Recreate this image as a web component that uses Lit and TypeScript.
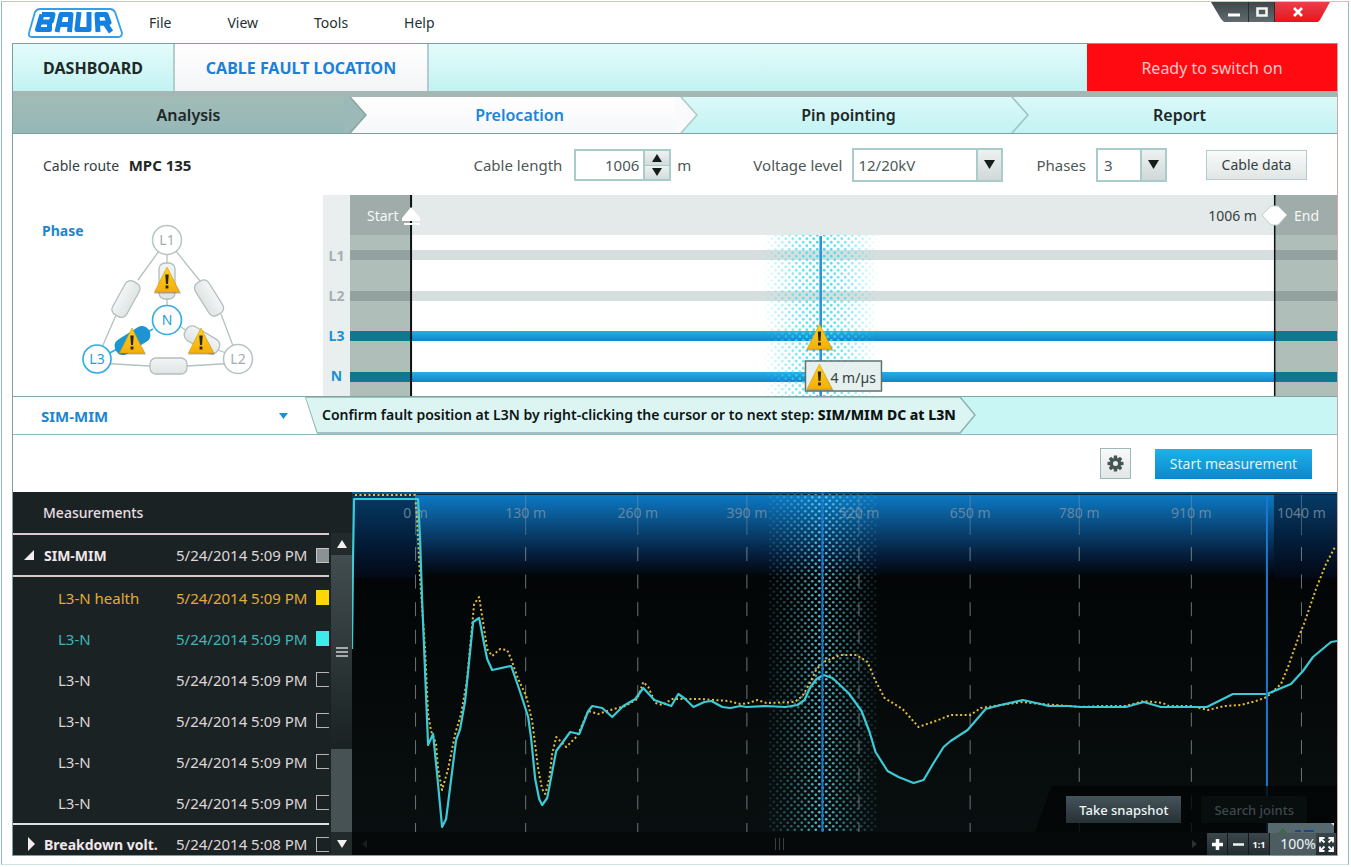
import { LitElement, html, svg, css } from "lit";
import { customElement, state } from "lit/decorators.js";

interface Row {
  id: string;
  name: string;
  time: string;
  tone: string;
  checked: boolean;
}

const PLOT_LEFT = 352;
const PLOT_WIDTH = 984;
const pct = (x: number, left: number, width: number) => `${(((x - left) / width) * 100).toFixed(3)}%`;

const TICKS = [
  { x: 415.5, label: "0 m" },
  { x: 525.5, label: "130 m" },
  { x: 637.5, label: "260 m" },
  { x: 746.5, label: "390 m" },
  { x: 858.5, label: "520 m" },
  { x: 969.5, label: "650 m" },
  { x: 1078.5, label: "780 m" },
  { x: 1190.5, label: "910 m" },
  { x: 1300.5, label: "1040 m" },
];

const FAULT_TRACE =
  "352,650 353,560 354,500 418,500 420,540 422,600 428,746 433,735 437,775 442,828 446,820 456,741 460,730 465,702 473,623 479,619 484,645 487,660 492,671 511,667 520,693 528,718 531,740 535,780 539,800 542,806 547,799 556,752 570,733 579,735 588,712 592,707 602,709 612,718 623,707 635,700 643,689 654,701 671,707 678,695 685,700 693,708 704,703 711,702 722,708 730,709 740,707 746,708 765,707 785,708 797,706 804,701 810,688 816,680 823,676 832,679 848,694 861,712 869,733 875,753 887,772 898,778 913,784 923,781 933,764 943,748 950,742 967,731 985,710 1000,706 1022,701 1040,705 1048,707 1068,707 1080,708 1125,708 1143,703 1160,708 1206,708 1220,701 1232,695 1266,695 1290,685 1302,672 1312,658 1330,643 1336,642";

const HEALTH_TRACE =
  "355,496 415,496 417,520 420,580 425,650 428,715 431,732 436,745 438,770 442,791 448,770 455,735 461,715 467,680 474,605 479,598 484,630 487,650 492,657 500,650 507,651 511,660 518,680 526,697 532,722 538,770 542,790 545,795 549,780 552,755 556,738 566,748 577,737 588,712 598,715 610,711 625,707 637,700 643,683 648,688 655,704 662,706 672,700 700,700 728,702 740,705 748,704 757,701 766,704 794,703 802,697 810,683 816,670 825,662 840,656 856,656 867,663 875,682 884,699 902,710 918,728 935,722 950,716 970,716 980,709 1000,706 1022,703 1040,705 1068,707 1080,708 1100,707 1125,707 1143,702 1162,704 1168,707 1190,707 1207,711 1224,707 1240,706 1255,702 1266,698 1280,685 1287,668 1298,637 1303,625 1315,590 1325,565 1334,548";

const warning = (x: number, y: number) => svg`
  <g transform="translate(${x} ${y})">
    <path d="M-13 13.5 L0 -12 L14 13.5 Z" fill="#5a4a20" opacity=".45"/>
    <path d="M-12.5 12 L0 -13 L12.5 12 Z" fill="url(#amber)" stroke="#d99a08" stroke-width=".6"/>
    <path d="M-1.7 -5.5 H1.7 L1 4 H-1 Z M-1.4 5.6 H1.4 V8.4 H-1.4 Z" fill="#2a2410"/>
  </g>`;

const amber = svg`
  <linearGradient id="amber" x1="0" y1="0" x2="0" y2="1">
    <stop offset="0" stop-color="#ffd21c"/><stop offset="1" stop-color="#f5ae0c"/>
  </linearGradient>`;

@customElement("phase-diagram")
export class PhaseDiagram extends LitElement {
  static styles = css`
    :host { display: block; }
    svg { display: block; width: 178px; height: 158px; }
    text { font-family: "Noto Sans", "Open Sans", sans-serif; font-size: 14px; text-anchor: middle; }
    .wire { stroke: #b4c2c0; stroke-width: 1.3; fill: none; }
    .box { fill: url(#shell); stroke: #b2bfbd; stroke-width: 1.3; }
    .off { fill: #fff; stroke: #b7c4c3; stroke-width: 1.5; }
    .on { fill: #fff; stroke: #35ade0; stroke-width: 1.7; }
    .t-off { fill: #a3aeae; }
    .t-on { fill: #1e9fdc; }
  `;

  render() {
    return html`<svg viewBox="80 222 178 158" role="img" aria-label="Phase diagram">
      <defs>
        ${amber}
        <linearGradient id="shell" x1="0" y1="0" x2="0" y2="1">
          <stop offset="0" stop-color="#f2f5f5"/><stop offset="1" stop-color="#dfe5e4"/>
        </linearGradient>
      </defs>
      <path class="wire" d="M167 240 L138 280 M116 315 L97 359 M167 240 L200 281 M221 314 L238 359 M97 363 L150 366 M187 366 L238 363 M167 254 V264 M167 299 V308 M181 327 L187 331 M218 350 L226 353"/>
      <path d="M108 354 L153 329" stroke="#35ade0" stroke-width="1.7"/>
      <rect class="box" x="107" y="291" width="38" height="16" rx="6" transform="rotate(-61 126 299)"/>
      <rect class="box" x="190" y="290" width="38" height="16" rx="6" transform="rotate(58 209 298)"/>
      <rect class="box" x="150" y="358" width="37" height="16" rx="6"/>
      <rect class="box" x="159" y="263" width="16" height="36" rx="6"/>
      <rect class="box" x="183" y="332" width="38" height="16" rx="7" transform="rotate(31 202 340)"/>
      <rect x="113" y="332" width="39" height="17" rx="8" fill="#1d95d3" transform="rotate(-32 132.500 340.500)"/>
      <circle class="off" cx="167" cy="240" r="14.500"/><text class="t-off" x="167" y="245">L1</text>
      <circle class="off" cx="238" cy="359" r="14.500"/><text class="t-off" x="238" y="364">L2</text>
      <circle class="on" cx="97" cy="359" r="14"/><text class="t-on" x="97" y="364">L3</text>
      <circle class="on" cx="167" cy="320" r="14.500"/><text class="t-on" x="167" y="325">N</text>
      ${warning(167, 280)} ${warning(132, 341)} ${warning(201, 341)}
    </svg>`;
  }
}

@customElement("cable-map")
export class CableMap extends LitElement {
  static styles = css`
    :host { display: grid; grid-template-columns: 27px 1fr; }
    .phases { display: grid; grid-template-rows: 40px repeat(4, 1fr); background: #e9efee; text-align: center; font-weight: 700; font-size: 14px; color: #a3b0ae; padding-bottom: 1px; }
    .phases span { align-self: center; }
    .phases .live { color: #1e90d2; }
    svg { display: block; width: 100%; height: 201px; }
    text { font-family: "Noto Sans", "Open Sans", sans-serif; font-size: 14px; }
  `;

  render() {
    const L = 350;
    const W = 986;
    const p = (x: number) => pct(x, L, W);
    const lines = [
      { y: 55, h: 10, fill: "#d6dfde", edge: "#93a29f" },
      { y: 96, h: 10, fill: "#d6dfde", edge: "#93a29f" },
      { y: 136, h: 10, fill: "url(#core)", edge: "#0f788f" },
      { y: 177, h: 10, fill: "url(#core)", edge: "#0f788f" },
    ];
    return html`
      <div class="phases"><i></i><span>L1</span><span>L2</span><span class="live">L3</span><span class="live">N</span></div>
      <svg role="img" aria-label="Cable route">
        <defs>
          ${amber}
          <linearGradient id="core" x1="0" y1="0" x2="0" y2="1"><stop offset="0" stop-color="#26b0e2"/><stop offset="1" stop-color="#0f86cc"/></linearGradient>
          <linearGradient id="fade"><stop offset="0" stop-color="#000"/><stop offset=".3" stop-color="#aaa"/><stop offset=".5" stop-color="#fff"/><stop offset=".7" stop-color="#aaa"/><stop offset="1" stop-color="#000"/></linearGradient>
          <pattern id="dots" width="7" height="7" patternUnits="userSpaceOnUse"><circle cx="1.750" cy="1.750" r="1.400" fill="#3edcee"/><circle cx="5.250" cy="5.250" r="1.400" fill="#3edcee"/></pattern>
          <mask id="halo"><rect x=${p(762)} y="0" width=${p(L + 116)} height="201" fill="url(#fade)"/></mask>
        </defs>
        <rect width="100%" height="201" fill="#fff"/>
        <rect width="100%" height="40" fill="#e4eaea"/>
        <rect width=${p(411)} height="201" fill="#b0beba"/>
        <rect width=${p(411)} height="40" fill="#a0aca9"/>
        <rect x=${p(1274)} width=${p(L + 62)} height="201" fill="#b0beba"/>
        <rect x=${p(1274)} width=${p(L + 62)} height="40" fill="#a0aca9"/>
        ${lines.map(
          (l) => svg`<rect y=${l.y} width="100%" height=${l.h} fill=${l.fill}/>
            <rect y=${l.y} width=${p(411)} height=${l.h} fill=${l.edge}/>
            <rect x=${p(1274)} y=${l.y} width=${p(L + 62)} height=${l.h} fill=${l.edge}/>`,
        )}
        <rect x=${p(762)} y="40" width=${p(L + 116)} height="161" fill="url(#dots)" mask="url(#halo)"/>
        <rect x=${p(410)} width="2" height="201" fill="#0c1214"/>
        <rect x=${p(1273)} width="1.500" height="201" fill="#0c1214"/>
        <text x=${p(367)} y="26" fill="#f4f8f8">Start</text>
        <text x=${p(1256)} y="26" fill="#33403f" text-anchor="end">1006 m</text>
        <text x=${p(1293)} y="26" fill="#f4f8f8">End</text>
        <svg x=${p(411)} overflow="visible"><path d="M-9 23 L0 12 L9 23 V26 H-9 Z M-7 28 H9 V30 H-7 Z" fill="#fff"/></svg>
        <svg x=${p(1274)} overflow="visible"><path d="M-13 20 L-4 11 H3 L12 20 L3 30 H-4 Z" fill="#fff" stroke="#c3cdcc"/></svg>
        <svg x=${p(820)} overflow="visible">
          <rect x="-1" y="41" width="2.500" height="160" fill="#2f8fd8"/>
          <rect x="-15" y="166" width="76" height="30" fill="#e6f0ef" stroke="#5c7270" stroke-width="1.500"/>
          <text x="10" y="188" fill="#33403f">4 m/µs</text>
          ${warning(-1, 142)} ${warning(-1, 182)}
        </svg>
      </svg>`;
  }
}

@customElement("trace-plot")
export class TracePlot extends LitElement {
  static styles = css`
    :host { display: grid; grid-template-rows: 1fr 23px; position: relative; background: #020405; overflow: hidden; }
    .canvas { position: absolute; inset: 0; width: 100%; height: 100%; }
    text { font-family: "Noto Sans", "Open Sans", sans-serif; font-size: 14px; fill: #7f93a4; fill-opacity: .8; text-anchor: middle; }
    .actions { position: relative; justify-self: end; align-self: end; display: flex; gap: 20px; padding: 10px 30px 9px 30px; background: linear-gradient(110deg, transparent 14px, #020405cc 15px); }
    button { font: inherit; border: 0; cursor: pointer; }
    .act { height: 27px; font-size: 13px; font-weight: 500; line-height: 20px; padding: 0 13px; color: #eef6f6; background: linear-gradient(#46535a, #263136); }
    .act:disabled { color: #3f484b; background: #080d0e; }
    .foot { position: relative; display: flex; align-items: center; background: #05090a; color: #3a4144; }
    .track { flex: 1; display: flex; align-items: center; justify-content: space-between; padding: 0 9px; height: 100%; }
    .zoom { display: flex; height: 22px; align-self: end; }
    .zoom button { width: 21px; padding: 0; background: linear-gradient(#3a464b, #232d31); border-right: 1px solid #12191b; display: grid; place-items: center; }
    .zoom svg { display: block; }
    .zoom output { width: 46px; text-align: right; font-size: 14px; line-height: 22px; color: #eef6f6; background: #4d5c61; }
    .zoom .ratio { font-size: 9px; font-weight: 700; color: #fff; }
    .tip { position: absolute; right: 3px; bottom: 22px; width: 66px; height: 10px; background: #56696f; }
  `;

  render() {
    const p = (x: number) => pct(x, PLOT_LEFT, PLOT_WIDTH);
    const w = (x: number) => pct(x, 0, PLOT_WIDTH);
    return html`
      <svg class="canvas" role="img" aria-label="Reflection traces over distance">
        <defs>
          <linearGradient id="sky" x1="0" y1="0" x2="0" y2="1"><stop offset="0" stop-color="#0c7ecb"/><stop offset=".4" stop-color="#09497d"/><stop offset=".75" stop-color="#051c38"/><stop offset="1" stop-color="#020405"/></linearGradient>
          <linearGradient id="floor" x1="0" y1="0" x2="0" y2="1"><stop offset="0" stop-color="#020405"/><stop offset="1" stop-color="#090f10"/></linearGradient>
          <linearGradient id="fade"><stop offset="0" stop-color="#1a1a1a"/><stop offset=".3" stop-color="#888"/><stop offset=".5" stop-color="#fff"/><stop offset=".7" stop-color="#888"/><stop offset="1" stop-color="#1a1a1a"/></linearGradient>
          <pattern id="dots" width="7" height="7" patternUnits="userSpaceOnUse"><circle cx="1.750" cy="1.750" r="1.350" fill="#5ccfe2"/><circle cx="5.250" cy="5.250" r="1.350" fill="#5ccfe2"/></pattern>
          <mask id="halo"><rect x=${p(767)} y="0" width=${w(110)} height="340" fill="url(#fade)"/></mask>
        </defs>
        <rect y="60" width="100%" height="303" fill="url(#floor)"/>
        <rect width="100%" height="86" fill="url(#sky)"/>
        <rect width=${w(64)} height="86" fill="#020d20" opacity=".58"/>
        <rect x=${p(1273)} width=${w(64)} height="86" fill="#020d20" opacity=".58"/>
        <rect width="100%" height="2" fill="#07598f"/><rect y="2" width="100%" height="1" fill="#032640"/>
        ${TICKS.map(
          (t) => svg`
            <line x1=${p(t.x)} x2=${p(t.x)} y1="3" y2="43" stroke="#8fa4b4" stroke-opacity=".45"/>
            <line x1=${p(t.x)} x2=${p(t.x)} y1="55" y2="341" stroke="#9aa0a8" stroke-opacity=".7" stroke-dasharray="14 13.600"/>
            <text x=${p(t.x)} y="26">${t.label}</text>`,
        )}
        <rect x=${p(767)} y="2" width=${w(110)} height="338" fill="url(#dots)" mask="url(#halo)"/>
        <svg viewBox="352 493 984 363" preserveAspectRatio="none" width="100%" height="100%">
          <g fill="none" stroke-linejoin="round">
            <polyline points=${HEALTH_TRACE} stroke="#e5bd3c" stroke-width="2" stroke-dasharray="2 2.500" vector-effect="non-scaling-stroke"/>
            <polyline points=${FAULT_TRACE} stroke="#3ccbd6" stroke-width="2.200" vector-effect="non-scaling-stroke"/>
            <path d="M822 493 V833 M1266 496 V833" stroke="#1b78cf" stroke-width="2" vector-effect="non-scaling-stroke"/>
          </g>
        </svg>
      </svg>
      <div class="actions">
        <button class="act" type="button">Take snapshot</button>
        <button class="act" type="button" disabled>Search joints</button>
      </div>
      <div class="foot">
        <div class="track">
          <svg width="7" height="8" aria-hidden="true"><path d="M6 0 L1 4 L6 8 Z" fill="#161e20"/></svg>
          <svg width="9" height="12" aria-hidden="true"><path d="M.5 0 V12 M4.500 0 V12 M8.500 0 V12" stroke="#3a4144"/></svg>
          <svg width="7" height="8" aria-hidden="true"><path d="M1 0 L6 4 L1 8 Z" fill="#2a3235"/></svg>
        </div>
        <div class="zoom">
          <button type="button" aria-label="Zoom in"><svg width="11" height="11"><path d="M5.500 0 V11 M0 5.500 H11" stroke="#fff" stroke-width="3.500"/></svg></button>
          <button type="button" aria-label="Zoom out"><svg width="11" height="11"><path d="M0 5.500 H11" stroke="#e8eeee" stroke-width="2.600"/></svg></button>
          <button type="button" class="ratio">1:1</button>
          <output>100%</output>
          <button type="button" aria-label="Fit to window"><svg width="15" height="15" viewBox="0 0 15 15" fill="none" stroke="#fff" stroke-width="1.800"><path d="M1 5.500 V1 H5.500 M1 1 L5.500 5.500 M9.500 1 H14 V5.500 M14 1 L9.500 5.500 M1 9.500 V14 H5.500 M1 14 L5.500 9.500 M9.500 14 H14 V9.500 M14 14 L9.500 9.500"/></svg></button>
        </div>
        <svg class="tip" viewBox="0 0 66 10" aria-hidden="true"><path d="M10 10 L15 5 L19 10 Z" fill="#3d6b45"/><path d="M27 8 H33 M36 8 H46" stroke="#1c4a80" stroke-width="2"/><path d="M63 0 H66 V3 Z" fill="#dfe8e8"/></svg>
      </div>`;
  }
}

@customElement("measurement-list")
export class MeasurementList extends LitElement {
  @state() private rows: Row[] = [
    { id: "m1", name: "L3-N health", time: "5/24/2014 5:09 PM", tone: "gold", checked: true },
    { id: "m2", name: "L3-N", time: "5/24/2014 5:09 PM", tone: "cyan", checked: true },
    { id: "m3", name: "L3-N", time: "5/24/2014 5:09 PM", tone: "", checked: false },
    { id: "m4", name: "L3-N", time: "5/24/2014 5:09 PM", tone: "", checked: false },
    { id: "m5", name: "L3-N", time: "5/24/2014 5:09 PM", tone: "", checked: false },
    { id: "m6", name: "L3-N", time: "5/24/2014 5:09 PM", tone: "", checked: false },
  ];

  static styles = css`
    :host { display: grid; grid-template-columns: 1fr 21px; grid-template-rows: 41px minmax(0, 1fr); min-height: 0; overflow: hidden; background: #1b2224; color: #dfd6d8; font-size: 15px; }
    h2 { grid-column: 1 / -1; margin: 0; padding-left: 30px; font-size: 14px; font-weight: 500; line-height: 42px; color: #e8dfe2; }
    .list { min-width: 0; margin-right: 2px; overflow: hidden; }
    .row { display: grid; grid-template-columns: 1fr 140px 13px; align-items: center; height: 41px; padding-left: 45px; }
    .row.group { padding-left: 10px; grid-template-columns: 21px 1fr 140px 13px; }
    .group b { font-size: 14px; font-weight: 700; color: #f0e8ea; white-space: nowrap; }
    .group.open { border-top: 2px solid #dcc8c8; border-bottom: 2px solid #dcc8c8; height: 40px; box-sizing: content-box; }
    .group.shut { border-top: 2px solid #d8e4e4; height: 38px; }
    .twist { width: 12px; padding: 0; border: 0; background: none; display: grid; }
    time { white-space: nowrap; }
    input { appearance: none; width: 13px; height: 15px; margin: 0; border: 1px solid #b8b4b6; border-right: 0; }
    .all { background: #8c9293; border-color: #c8c4c6; }
    .gold { color: #e2ac34; }
    .cyan { color: #42b6b6; }
    .gold input { background: #fed507; border-color: #fed507; }
    .cyan input { background: #3eebe8; border-color: #3eebe8; }
    .bar { display: grid; grid-template-rows: 22px 1fr 83px 23px; background: #1b2224; }
    .bar button { border: 0; padding: 0; display: grid; place-items: center; background: #222a2c; }
    .thumb { background: linear-gradient(#424d4f, #1a2223); display: grid; place-items: center; }
    .rest { background: #465254; }
  `;

  private toggle(id: string) {
    this.rows = this.rows.map((r) => (r.id === id ? { ...r, checked: !r.checked } : r));
  }

  render() {
    return html`
      <h2>Measurements</h2>
      <div class="list">
        <div class="row group open">
          <button class="twist" aria-label="Collapse SIM-MIM"><svg width="12" height="12"><path d="M11 1 V11 H1 Z" fill="#f0eeee"/></svg></button>
          <b>SIM-MIM</b><time>5/24/2014 5:09 PM</time><input class="all" type="checkbox" aria-label="All SIM-MIM" />
        </div>
        ${this.rows.map(
          (r) => html`<div class="row ${r.tone}">
            <label for=${r.id}>${r.name}</label><time>${r.time}</time>
            <input id=${r.id} type="checkbox" .checked=${r.checked} @change=${() => this.toggle(r.id)} />
          </div>`,
        )}
        <div class="row group shut">
          <button class="twist" aria-label="Expand Breakdown volt."><svg width="12" height="14"><path d="M5 0 L12 7 L5 14 Z" fill="#f0eeee"/></svg></button>
          <b>Breakdown volt.</b><time>5/24/2014 5:08 PM</time><input type="checkbox" aria-label="All Breakdown volt." />
        </div>
      </div>
      <div class="bar">
        <button aria-label="Scroll up"><svg width="10" height="8"><path d="M5 0 L10 8 H0 Z" fill="#f4f0f0"/></svg></button>
        <div class="thumb"><svg width="12" height="10"><path d="M0 1 H12 M0 5 H12 M0 9 H12" stroke="#cdd2d2" stroke-width="1.300"/></svg></div>
        <div class="rest"></div>
        <button aria-label="Scroll down"><svg width="10" height="8"><path d="M0 0 H10 L5 8 Z" fill="#f4f0f0"/></svg></button>
      </div>`;
  }
}

@customElement("app-root")
export class AppRoot extends LitElement {
  @state() private length = 1006;

  static styles = css`
    :host { display: block; font-family: "Noto Sans", "Open Sans", sans-serif; font-size: 14px; color: #33403f; background: #fff; }
    * { box-sizing: border-box; }
    button, input, select { font: inherit; color: inherit; }
    a { color: inherit; text-decoration: none; }
    .window { margin: 1px 2px 0 1px; padding: 0 10px 8px; border: 1px solid #8fbcbc; border-top-color: #e6b9b9; border-bottom-color: #cfe3e3; }
    .title { display: flex; align-items: flex-start; height: 41px; }
    .logo { display: block; margin: 4px 0 0 15px; }
    .menu { display: flex; gap: 56px; margin-left: 25px; line-height: 42px; color: #26302f; }
    .ctl { margin: 0 8px 0 auto; display: flex; clip-path: polygon(0 0, 100% 0, 119px 0, 109px 18px, 107px 20px, 13px 20px, 10px 17px); }
    .ctl button { border: 0; padding: 0; height: 20px; width: 26px; display: grid; place-items: center; background: linear-gradient(#3c484a, #5f6b6d); border-right: 1px solid #263032; }
    .ctl button:first-child { width: 38px; padding-left: 8px; }
    .ctl .close { width: 55px; padding-right: 10px; background: linear-gradient(#e8404a, #e8141e); border: 0; }
    .frame { border: 1px solid #7da09f; border-right-color: #d2a9a9; }
    .tabs { display: flex; height: 47px; background: linear-gradient(#e4fbfb, #c2f3f2); }
    .tabs a { display: grid; place-items: center; font-size: 16px; font-weight: 700; color: #1e2928; border-right: 2px solid #b2cdcc; }
    .tabs a.dash { width: 162px; }
    .tabs a.cur { width: 254px; color: #1a80d8; background: linear-gradient(#fff, #f4f5f8); }
    .status { width: 250px; margin-left: auto; border: 0; background: #fe0a10; color: #ffc6c6; font-size: 16px; }
    .steps { display: grid; grid-template-columns: repeat(4, 1fr); height: 43px; margin: 0; padding: 0; list-style: none; border-top: 6px solid #a4b7b4; border-bottom: 1px solid #7da09f; font-size: 16px; font-weight: 600; color: #1d2827; }
    .steps li { position: relative; display: grid; place-items: center; padding-left: 20px; background: linear-gradient(#dcf9f9, #c3f3f3); }
    .steps li:nth-child(1) { background: linear-gradient(#a0bcb6, #96b7b8); z-index: 3; }
    .steps li:nth-child(2) { background: linear-gradient(#fff, #f6f7fa); color: #1a86dc; z-index: 2; }
    .steps li:nth-child(3) { z-index: 1; padding-left: 16px; }
    .steps li:nth-child(4) { padding-left: 16px; }
    .steps svg { position: absolute; left: 100%; top: 0; height: 100%; width: 23px; }
    .params { display: flex; align-items: center; height: 61px; padding: 0 30px; font-size: 15px; color: #4b5958; }
    .route { margin-right: auto; font-size: 14px; color: #33403f; }
    .route b { margin-left: 6px; font-size: 15px; color: #1d2827; font-weight: 700; }
    .field { display: flex; align-items: center; gap: 10px; }
    .length { gap: 6px; margin-right: 62px; }
    .length label { margin-right: 6px; }
    .volt { margin-right: 33px; }
    .ph { margin-right: 39px; }
    .spin { display: flex; width: 97px; height: 32px; border: 2px solid #a9cbca; }
    .spin input { flex: 1; min-width: 0; border: 0; background: #fff; text-align: right; padding: 0 4px; outline: 0; }
    .spin div { display: grid; grid-template-rows: 1fr 1fr; width: 26px; border-left: 2px solid #a9cbca; }
    .spin button { border: 0; padding: 0; display: grid; place-items: center; background: linear-gradient(#eef1f1, #d4dcdb); }
    .spin button + button { border-top: 1px solid #a9cbca; }
    .pick { position: relative; display: block; }
    .pick select { appearance: none; width: 100%; height: 34px; border: 2px solid #a9cbca; border-radius: 0; background: #fff; padding: 0 4px; outline: 0; }
    .pick span { position: absolute; right: 2px; top: 2px; bottom: 2px; width: 25px; display: grid; place-items: center; border-left: 2px solid #a9cbca; background: linear-gradient(#eef1f1, #d0d9d8); pointer-events: none; }
    .volt .pick { width: 151px; }
    .ph .pick { width: 71px; }
    .ph select { padding-left: 6px; }
    .btn { height: 30px; padding: 0; width: 101px; border: 1px solid #b3cccb; background: linear-gradient(#fafbfb, #e0e6e5); color: #33403f; font-size: 14px; }
    .cable { display: grid; grid-template-columns: 310px 1fr; height: 201px; }
    .phase { padding: 26px 0 0 29px; }
    .phase h2 { margin: 0; font-size: 14px; line-height: 20px; font-weight: 700; color: #1e86cf; }
    .phase phase-diagram { margin: -19px 0 0 38px; }
    .method { display: grid; grid-template-columns: 292px 1fr; height: 39px; border-top: 1px solid #7fa5a4; border-bottom: 1px solid #8fbab9; }
    .mode { position: relative; display: flex; align-items: center; }
    .mode select { appearance: none; width: 100%; height: 100%; border: 0; background: none; padding: 0 0 0 28px; font-size: 15px; font-weight: 700; color: #1e86cf; outline: 0; }
    .mode svg { position: absolute; right: 17px; top: 16px; pointer-events: none; }
    .hint { background: #c8f6f4; clip-path: polygon(0 0, 100% 0, 100% 100%, 12px 100%); }
    .msg { position: relative; width: fit-content; min-width: 671px; height: 37px; padding: 0 15px 0 17px; line-height: 35px; white-space: nowrap; color: #0c1414; font-weight: 600; }
    .msg b { font-weight: 800; }
    .msg svg { position: absolute; inset: 0; width: 100%; height: 100%; }
    .msg p { position: relative; margin: 0; }
    .tools { display: flex; align-items: center; justify-content: flex-end; gap: 24px; height: 57px; padding-right: 25px; }
    .gear { display: grid; place-items: center; width: 31px; height: 31px; padding: 0; border: 1px solid #9bb9b8; background: linear-gradient(#fafafa, #e1e6e6); }
    .start { width: 157px; height: 30px; padding: 0; border: 0; color: #dff4fc; background: linear-gradient(#22b0e6, #0a88cf); }
    .work { display: grid; grid-template-columns: 339px 1fr; grid-template-rows: minmax(0, 1fr); height: 363px; }
  `;

  render() {
    const arrow = html`<svg width="11" height="9" aria-hidden="true"><path d="M0 0 H11 L5.500 9 Z" fill="#141c1c" /></svg>`;
    const chevron = (fill: string, line: string) => html`<svg viewBox="0 0 23 37" preserveAspectRatio="none" aria-hidden="true">
      <path d="M-1 0 H6 L22 18.500 L6 37 H-1 Z" fill=${fill} /><path d="M6 0 L22 18.500 L6 37" fill="none" stroke=${line} stroke-width="1.600" />
    </svg>`;
    return html`<div class="window">
      <header class="title">
        <svg class="logo" width="97" height="34" viewBox="27 6 97 34" role="img" aria-label="BAUR">
          <path d="M40 9 H110 Q113 9 115 12 L122 33 Q122 37 118 37 H32 Q28 37 29 33 L35 12 Q37 9 40 9 Z" fill="#fff" stroke="#35a0ea" stroke-width="1.800"/>
          <g fill="none" stroke="#1480e0" stroke-width="5" stroke-linejoin="round">
            <path d="M42 14.500 H53 L51.500 21 L49.500 22.500 L49.500 29.500 H37.500 L42 14.500 M40 22 H50"/>
            <path d="M57 32 L61 14.500 H71 L69.500 32 M60 24.500 H70"/>
            <path d="M79 12 L77 29.500 H89 L89 12"/>
            <path d="M98 32 L97 14.500 H106 L109 22.500 L98 23.500 M105 23 L111 32"/>
          </g>
        </svg>
        <nav class="menu" aria-label="Main"><a href="#file">File</a><a href="#view">View</a><a href="#tools">Tools</a><a href="#help">Help</a></nav>
        <div class="ctl">
          <button aria-label="Minimize"><svg width="12" height="12"><path d="M0 9 H12" stroke="#fff" stroke-width="3" /></svg></button>
          <button aria-label="Maximize"><svg width="12" height="10"><path d="M1.500 1.500 H10.500 V8.500 H1.500 Z" fill="none" stroke="#f4f4f4" stroke-width="2.600" /></svg></button>
          <button class="close" aria-label="Close"><svg width="10" height="10"><path d="M1 1 L9 9 M9 1 L1 9" stroke="#fff" stroke-width="2.600" /></svg></button>
        </div>
      </header>
      <main class="frame">
        <nav class="tabs" aria-label="Views">
          <a class="dash" href="#dashboard">DASHBOARD</a><a class="cur" href="#cfl">CABLE FAULT LOCATION</a>
          <button class="status">Ready to switch on</button>
        </nav>
        <ol class="steps">
          <li><a href="#analysis">Analysis</a>${chevron("#9bbab7", "#86a5a4")}</li>
          <li><a href="#prelocation">Prelocation</a>${chevron("#fafafc", "#a9cccb")}</li>
          <li><a href="#pinpointing">Pin pointing</a>${chevron("none", "#9cc4c4")}</li>
          <li><a href="#report">Report</a></li>
        </ol>
        <form class="params" @submit=${(e: Event) => e.preventDefault()}>
          <span class="route">Cable route <b>MPC 135</b></span>
          <div class="field length">
            <label for="len">Cable length</label>
            <div class="spin">
              <input id="len" type="text" inputmode="numeric" .value=${String(this.length)} />
              <div>
                <button type="button" aria-label="Increase" @click=${() => this.length++}><svg width="10" height="8"><path d="M5 0 L10 8 H0 Z" fill="#141c1c" /></svg></button>
                <button type="button" aria-label="Decrease" @click=${() => this.length--}><svg width="10" height="8"><path d="M0 0 H10 L5 8 Z" fill="#141c1c" /></svg></button>
              </div>
            </div>
            <span>m</span>
          </div>
          <div class="field volt"><label for="volt">Voltage level</label>
            <div class="pick"><select id="volt"><option>12/20kV</option></select><span>${arrow}</span></div>
          </div>
          <div class="field ph"><label for="ph">Phases</label>
            <div class="pick"><select id="ph"><option>3</option></select><span>${arrow}</span></div>
          </div>
          <button class="btn" type="button">Cable data</button>
        </form>
        <section class="cable">
          <div class="phase"><h2>Phase</h2><phase-diagram></phase-diagram></div>
          <cable-map></cable-map>
        </section>
        <section class="method">
          <div class="mode">
            <select aria-label="Method"><option>SIM-MIM</option></select>
            <svg width="9" height="6" aria-hidden="true"><path d="M0 0 H9 L4.500 6 Z" fill="#1e8fd6" /></svg>
          </div>
          <div class="hint"><div class="msg">
            <svg viewBox="0 0 671 37" preserveAspectRatio="none" aria-hidden="true"><path d="M0 0 H655 L670 18 L655 36 H12 Z" fill="#dcf5f3" stroke="#8cb3b2" stroke-width="1.500" vector-effect="non-scaling-stroke" /></svg>
            <p>Confirm fault position at L3N by right-clicking the cursor or to next step: <b>SIM/MIM DC at L3N</b></p>
          </div></div>
        </section>
        <section class="tools">
          <button class="gear" aria-label="Settings"><svg width="17" height="17" viewBox="-8.500 -8.500 17 17"><circle r="4" fill="none" stroke="#465453" stroke-width="3"/><g fill="#465453">${[0, 45, 90, 135, 180, 225, 270, 315].map((a) => svg`<path d="M-1.600 -8 H1.600 L2 -4.500 H-2 Z" transform="rotate(${a})"/>`)}</g></svg></button>
          <button class="start">Start measurement</button>
        </section>
        <section class="work"><measurement-list></measurement-list><trace-plot></trace-plot></section>
      </main>
    </div>`;
  }
}
